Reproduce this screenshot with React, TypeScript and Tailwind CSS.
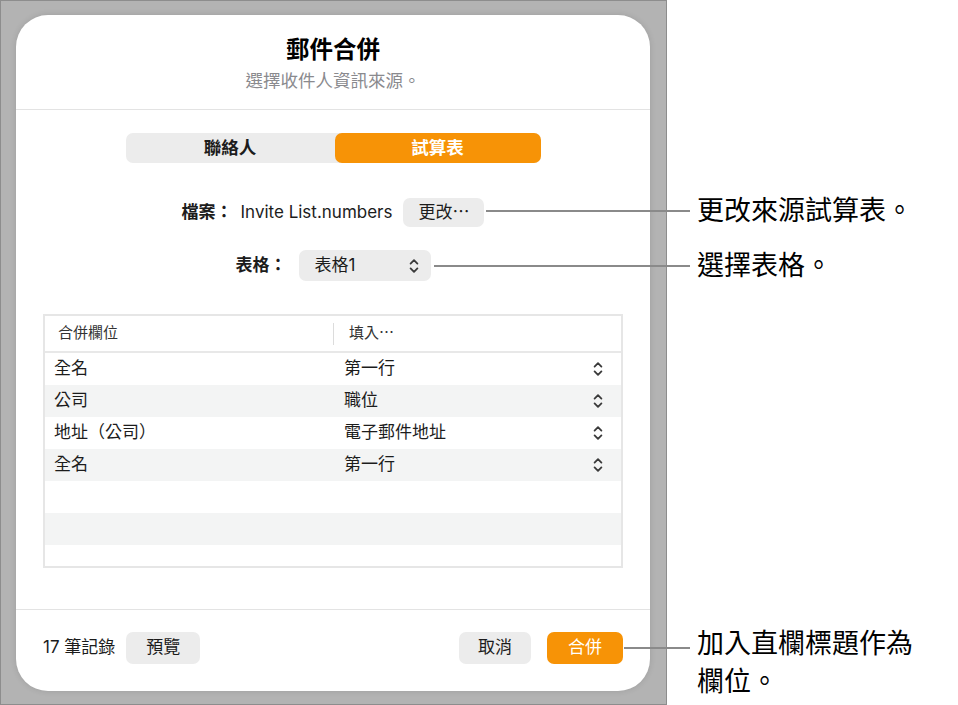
const FONT = "font-['Inter','Noto_Sans_CJK_TC',sans-serif]";

function UpDown({ className = "" }: { className?: string }) {
  return (
    <svg width="10" height="16" viewBox="0 0 10 16" className={className} aria-hidden="true">
      <path
        d="M1.6 5.6 L5 2.2 L8.4 5.6 M1.6 10.4 L5 13.8 L8.4 10.4"
        fill="none"
        stroke="#3a3a3a"
        strokeWidth="1.8"
        strokeLinecap="round"
        strokeLinejoin="round"
      />
    </svg>
  );
}

const rows: [string, string][] = [
  ["全名", "第一行"],
  ["公司", "職位"],
  ["地址（公司）", "電子郵件地址"],
  ["全名", "第一行"],
];

function MergeTable() {
  return (
    <div className="mx-[27px] mt-[33px] border-2 border-[#e6e6e6]">
      <div className="grid h-[37px] grid-cols-2 border-b-2 border-[#e8e8e8] text-[15px] text-[#333]">
        <div className="flex items-center pl-[13px]">合併欄位</div>
        <div className="flex items-center">
          <span className="h-[22px] w-px bg-[#dcdcdc]" />
          <span className="pl-[15px]">填入⋯</span>
        </div>
      </div>
      {rows.map(([field, fill], i) => (
        <div
          key={i}
          className={`grid h-[32px] grid-cols-2 text-[17px] text-[#1c1c1c] ${i % 2 === 1 ? "bg-[#f3f4f4]" : "bg-white"}`}
        >
          <div className="flex items-center pl-[9px]">{field}</div>
          <div className="flex items-center justify-between pl-[11px] pr-[18px]">
            <span>{fill}</span>
            <UpDown />
          </div>
        </div>
      ))}
      <div className="h-[32px] bg-white" />
      <div className="h-[32px] bg-[#f3f4f4]" />
      <div className="h-[21px] bg-white" />
    </div>
  );
}

function Card() {
  return (
    <div className="flex h-[676px] w-[634px] flex-col rounded-[32px] bg-white shadow-[0_0_6px_rgba(0,0,0,0.12)]">
      <div className="border-b border-[#e3e3e3] pb-[16px] pt-[20px] text-center">
        <div className="text-[23.5px] font-semibold leading-[30px] text-black">郵件合併</div>
        <div className="mt-[4px] text-[17.5px] leading-[24px] text-[#8a8a8e]">選擇收件人資訊來源。</div>
      </div>

      <div className="flex-1 pt-[23px]">
        <div className="mx-auto flex h-[30px] w-[415px] rounded-[7px] bg-[#ececec] text-[17.5px] font-semibold">
          <div className="flex w-[209px] items-center justify-center text-[#1c1c1c]">聯絡人</div>
          <div className="flex flex-1 items-center justify-center rounded-[7px] bg-[#f79306] text-white">試算表</div>
        </div>

        <div className="mt-[35px] flex h-[29px] items-center justify-center text-[17px] text-[#1c1c1c]">
          <span className="font-semibold">檔案：</span>
          <span className="ml-[8px]">Invite List.numbers</span>
          <span className="ml-[11px] flex h-[29px] items-center rounded-[7px] bg-[#ececec] px-[15px]">更改⋯</span>
        </div>

        <div className="mt-[23px] flex h-[31px] items-center justify-center text-[17px] text-[#1c1c1c]">
          <span className="font-semibold">表格：</span>
          <span className="ml-[12px] flex h-[31px] w-[132px] items-center justify-between rounded-[7px] bg-[#ececec] pl-[16px] pr-[12px]">
            <span>表格1</span>
            <UpDown />
          </span>
        </div>

        <MergeTable />
      </div>

      <div className="flex items-center border-t border-[#e3e3e3] px-[27px] pb-[27px] pt-[22px] text-[17px] text-[#1c1c1c]">
        <span>17 筆記錄</span>
        <span className="ml-[11px] flex h-[32px] w-[74px] items-center justify-center rounded-[7px] bg-[#ececec]">預覽</span>
        <span className="ml-auto flex h-[32px] w-[72px] items-center justify-center rounded-[7px] bg-[#ececec]">取消</span>
        <span className="ml-[16px] flex h-[32px] w-[76px] items-center justify-center rounded-[7px] bg-[#f79306] text-white">合併</span>
      </div>
    </div>
  );
}

export default function App() {
  return (
    <div className={`relative flex h-[705px] w-[958px] bg-white ${FONT}`}>
      <div className="h-[705px] w-[667px] border border-[#8d8d8d] bg-[#b3b3b3] pl-[15px] pt-[14px]">
        <Card />
      </div>

      {/* callouts */}
      <div className="absolute left-[486px] top-[210px] h-[2px] w-[204px] bg-[#8a8a8a]" />
      <div className="absolute left-[434px] top-[265px] h-[2px] w-[256px] bg-[#8a8a8a]" />
      <div className="absolute left-[624px] top-[647px] h-[2px] w-[66px] bg-[#8a8a8a]" />

      <div className="absolute left-[697px] top-[192px] text-[27px] leading-[38px] text-black">更改來源試算表。</div>
      <div className="absolute left-[697px] top-[247px] text-[27px] leading-[38px] text-black">選擇表格。</div>
      <div className="absolute left-[697px] top-[625px] w-[240px] text-[27px] leading-[38px] text-black">
        加入直欄標題作為
        <br />
        欄位。
      </div>
    </div>
  );
}
